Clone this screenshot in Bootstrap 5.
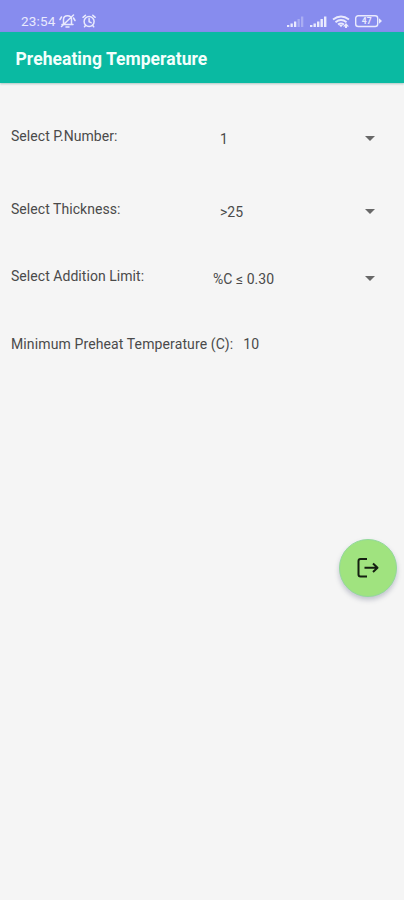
<!DOCTYPE html>
<html lang="en">
<head>
<meta charset="utf-8">
<meta name="viewport" content="width=device-width, initial-scale=1">
<title>Preheating Temperature</title>
<link rel="stylesheet" href="https://cdn.jsdelivr.net/npm/bootstrap@5.3.0/dist/css/bootstrap.min.css">
<style>
body{background:#f5f5f5;font-family:Roboto,"Liberation Sans",sans-serif;font-size:14px;line-height:20px;letter-spacing:.05px;color:#4a4a4a;height:900px;overflow:hidden}
.status{height:32px;background:#878cee;color:#e9eafd;padding:12px 21px 0 21px}
.clock{font-size:13.5px;line-height:19px;letter-spacing:.2px;width:38px;font-weight:400}
.status svg{display:block}
.appbar{height:51px;background:#0abaa2;color:#f4fffc;padding:0 16px 0 15.5px;box-shadow:0 1px 2px rgba(0,90,80,.3)}
.appbar h1{font-size:17.5px;line-height:24px;font-weight:700;margin-top:2px}
.fields{padding:43px 29px 0 11px}
.field-row{height:67px}
.field-row.first{height:73px}
.field-label{width:202px;white-space:nowrap}
.field-value{margin-top:2.5px;padding-left:7px;font-size:14px}
.field-value.limit{padding-left:0}
.caret{width:10px;height:5px;margin-top:10px;background:#686868;clip-path:polygon(0 0,100% 0,50% 100%)}
.result-row{padding-top:.5px;letter-spacing:.12px}
.result-value{margin-left:10px}
.fab{position:absolute;left:338.500px;top:538.500px;width:58px;height:58px;background:#a0e37f;border:1px solid #93d99b;box-shadow:0 3px 5px rgba(60,70,100,.28)}
</style>
</head>
<body>
<header>
<div class="status d-flex align-items-start">
  <span class="clock">23:54</span>
  <svg width="40" height="18" viewBox="0 0 40 18" fill="none" stroke="#e9eafd" stroke-width="1.5" stroke-linecap="round" stroke-linejoin="round">
    <path d="M3 12.5h11M4.500 12V7.500c0-5 8-5 8 0V12M7 15h3M2.500 14.500 14.500 3M1 7.500 2.500 5M14.500 6 16 8.500"/>
    <circle cx="30.100" cy="9.500" r="5"/><path d="M30.100 6.500v3.300l2 .8M24 5.300l2.400-2M36.200 5.300l-2.400-2M26.500 13.500l-1 1.300M33.700 13.500l1 1.300"/>
  </svg>
  <svg class="ms-auto" width="96" height="18" viewBox="0 0 96 18">
    <g fill="#e9eafd"><path d="M0 13h2.300v2H0zM3.500 11.500h2.300V15H3.500zM7 9.500h2.300V15H7z"/><path opacity=".35" d="M10.500 7h2.300v8h-2.300zM14 4.500h2.300V15H14z"/>
    <path d="M23 13h2.400v2H23zM26.500 11.500h2.400V15h-2.400zM30 9.500h2.400V15H30zM33.500 7h2.400v8h-2.400zM37 4.500h2.400V15H37z"/></g>
    <g fill="none" stroke="#e9eafd" stroke-width="1.900"><path d="M46 7.500q8-6 16 0M48.500 10.200q5.500-4.400 11 0M51 12.600q3-2.200 6 0"/></g>
    <path d="M52 13h4l-2 2.300zM59 11l3 3.500h-2V16h-2v-1.500h-2z" fill="#e9eafd"/>
    <rect x="68.700" y="3.700" width="22" height="10.800" rx="2.500" fill="none" stroke="#e9eafd" stroke-width="1.400"/>
    <path d="M92 6.300 95 9l-3 2.700z" fill="#e9eafd"/>
    <text x="79.700" y="12.200" text-anchor="middle" font-size="8.500" font-weight="700" font-family="Roboto,sans-serif" fill="#e9eafd">47</text>
  </svg>
</div>
<div class="appbar d-flex align-items-center"><h1 class="mb-0">Preheating Temperature</h1></div>
</header>
<main class="fields">
  <div class="field-row first d-flex align-items-start"><span class="field-label">Select P.Number:</span><div class="field-value flex-grow-1"><span>1</span></div><span class="caret"></span></div>
  <div class="field-row d-flex align-items-start"><span class="field-label">Select Thickness:</span><div class="field-value flex-grow-1"><span>&gt;25</span></div><span class="caret"></span></div>
  <div class="field-row d-flex align-items-start"><span class="field-label">Select Addition Limit:</span><div class="field-value limit flex-grow-1"><span>%C ≤ 0.30</span></div><span class="caret"></span></div>
  <div class="result-row d-flex align-items-start"><span>Minimum Preheat Temperature (C):</span><span class="result-value">10</span></div>
</main>
<button class="fab btn rounded-circle p-0 d-flex align-items-center justify-content-center" type="button" aria-label="Exit">
  <svg width="24" height="24" viewBox="0 0 24 24" fill="none" stroke="#152011" stroke-width="2" stroke-linejoin="round"><path d="M11 3H4.500Q2.500 3 2.500 5V18.500Q2.500 20.500 4.500 20.500H11M8.500 11.800H21M17 7.500 21.500 11.800 17 16"/></svg>
</button>
<script src="https://cdn.jsdelivr.net/npm/bootstrap@5.3.0/dist/js/bootstrap.bundle.min.js"></script>
</body>
</html>
